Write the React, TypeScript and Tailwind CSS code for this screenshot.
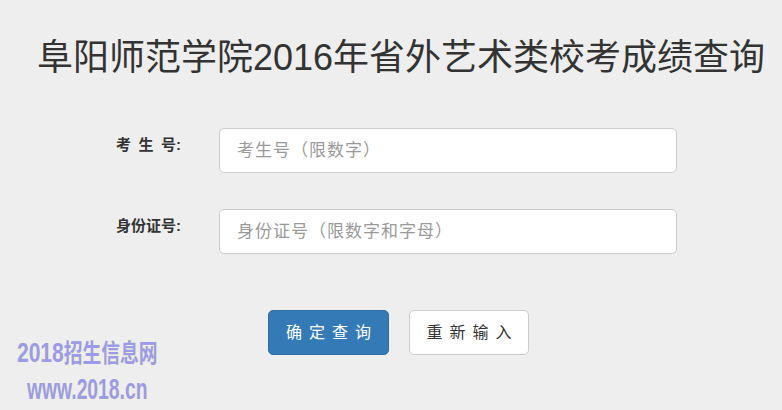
export default function App() {
  const font = { fontFamily: '"Liberation Sans", "Noto Sans CJK SC", sans-serif' };

  return (
    <div className="relative min-h-[410px] w-full bg-[#eeeeee] text-[#333333]" style={font}>
      <h1 className="pl-[37px] pt-[34px] text-[36px] font-normal leading-[48px] whitespace-nowrap">
        阜阳师范学院2016年省外艺术类校考成绩查询
      </h1>

      <form className="mt-[46px] flex flex-col gap-[36px]">
        <div className="flex items-center">
          <label className="mb-[11px] flex w-[181px] justify-end gap-[7.5px] text-[15px] font-bold leading-[20px]">
            <span>考</span>
            <span>生</span>
            <span>号:</span>
          </label>
          <input
            type="text"
            placeholder="考生号（限数字）"
            className="ml-[38px] h-[45px] w-[458px] rounded-[5px] border border-[#cccccc] bg-white pl-[17px] text-[17px] tracking-[1px] outline-none placeholder:text-[#999999]"
          />
        </div>
        <div className="flex items-center">
          <label className="mb-[11px] w-[181px] text-right text-[15px] font-bold leading-[20px]">身份证号:</label>
          <input
            type="text"
            placeholder="身份证号（限数字和字母）"
            className="ml-[38px] h-[45px] w-[458px] rounded-[5px] border border-[#cccccc] bg-white pl-[17px] text-[17px] tracking-[1px] outline-none placeholder:text-[#999999]"
          />
        </div>

        <div className="mt-[20px] flex gap-[20px] pl-[268px]">
          <button
            type="button"
            className="h-[45px] w-[121px] rounded-[5px] border border-[#2e6da4] bg-[#337ab7] pl-[7px] text-[16px] tracking-[7px] text-white"
          >
            确定查询
          </button>
          <button
            type="button"
            className="h-[45px] w-[120px] rounded-[5px] border border-[#cccccc] bg-white pl-[7px] text-[16px] tracking-[7px] text-[#333333]"
          >
            重新输入
          </button>
        </div>
      </form>

      {/* watermark */}
      <div className="absolute left-[17px] top-[339px] font-bold text-[#9b9beb] [text-shadow:0_0_1px_#f4f29a]">
        <div className="origin-left scale-x-[0.75] whitespace-nowrap leading-[28px]">
          <span className="text-[28px]">2018</span>
          <span className="text-[25px]">招生信息网</span>
        </div>
        <div className="ml-[10px] mt-[4px] origin-left scale-x-[0.665] whitespace-nowrap text-[29px] leading-[29px]">
          www.2018.cn
        </div>
      </div>
    </div>
  );
}
